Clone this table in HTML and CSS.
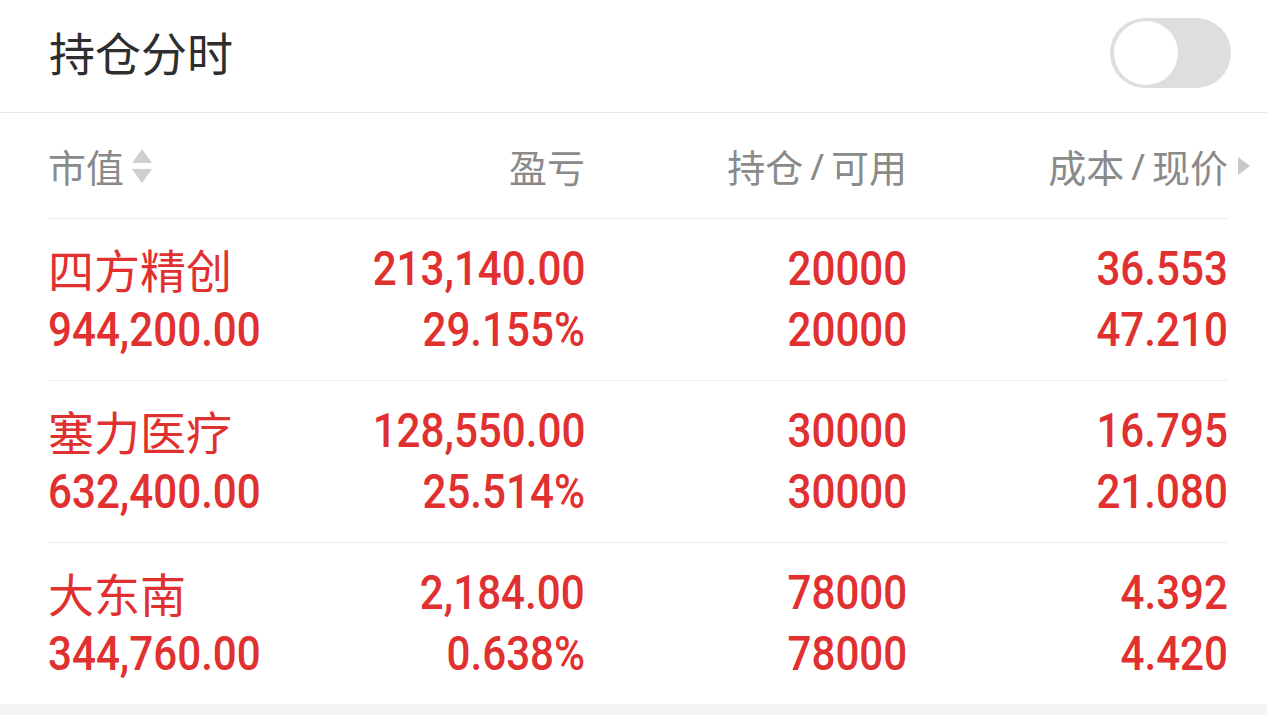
FILE: index.html
```html
<!DOCTYPE html>
<html lang="zh-CN">
<head>
<meta charset="utf-8">
<title>持仓分时</title>
<link rel="stylesheet" href="styles.css">
</head>
<body>
<div class="page">
  <header class="topbar">
    <h1 class="title">持仓分时</h1>
    <div class="toggle"><span class="knob"></span></div>
  </header>
  <section class="table">
    <div class="row head">
      <div class="cell left">市值<svg class="sort" viewBox="0 0 20 38" width="20" height="38"><polygon points="10,2 20,16 0,16" fill="#cfcfcf"/><polygon points="0,22 20,22 10,36" fill="#cfcfcf"/></svg></div>
      <div class="cell">盈亏</div>
      <div class="cell">持仓<span class="slash">/</span>可用</div>
      <div class="cell">成本<span class="slash">/</span>现价<svg class="more" viewBox="0 0 12 20" width="12" height="20"><polygon points="0,1 12,10 0,19" fill="#c8c8c8"/></svg></div>
    </div>
    <div class="row item">
      <div class="cell left"><div class="name">四方精创</div><div class="num">944,200.00</div></div>
      <div class="cell"><div class="num">213,140.00</div><div class="num">29.155%</div></div>
      <div class="cell"><div class="num">20000</div><div class="num">20000</div></div>
      <div class="cell"><div class="num">36.553</div><div class="num">47.210</div></div>
    </div>
    <div class="row item">
      <div class="cell left"><div class="name">塞力医疗</div><div class="num">632,400.00</div></div>
      <div class="cell"><div class="num">128,550.00</div><div class="num">25.514%</div></div>
      <div class="cell"><div class="num">30000</div><div class="num">30000</div></div>
      <div class="cell"><div class="num">16.795</div><div class="num">21.080</div></div>
    </div>
    <div class="row item last">
      <div class="cell left"><div class="name">大东南</div><div class="num">344,760.00</div></div>
      <div class="cell"><div class="num">2,184.00</div><div class="num">0.638%</div></div>
      <div class="cell"><div class="num">78000</div><div class="num">78000</div></div>
      <div class="cell"><div class="num">4.392</div><div class="num">4.420</div></div>
    </div>
  </section>
  <div class="footer-band"></div>
</div>
</body>
</html>
```

FILE: styles.css
```css
* { box-sizing: border-box; }
html, body { margin: 0; padding: 0; background: #ffffff; }
body {
  font-family: "Noto Sans CJK SC", "Noto Sans", sans-serif;
  width: 1267px;
  height: 715px;
  overflow: hidden;
}
.page { display: flex; flex-direction: column; height: 715px; }

.topbar {
  height: 113px;
  display: flex;
  align-items: center;
  justify-content: space-between;
  padding: 0 36px 0 49px;
  border-bottom: 1px solid #e6e6e6;
}
.title {
  margin: 0;
  font-size: 46px;
  font-weight: 400;
  color: #2e2e2e;
  line-height: 1;
  margin-top: -10px;
}
.toggle {
  width: 121px;
  height: 70px;
  border-radius: 35px;
  background: #dedede;
  padding: 3px 4px;
  display: flex;
  align-items: center;
  margin-top: -6px;
}
.knob {
  width: 64px;
  height: 64px;
  border-radius: 50%;
  background: #ffffff;
}

.table { padding: 0 39px 0 48px; flex: 0 0 auto; }
.row {
  display: grid;
  grid-template-columns: 216px 321px 322px 321px;
  border-bottom: 1px solid #ededed;
}
.row.last { border-bottom: none; }
.cell { text-align: right; display: flex; flex-direction: column; align-items: flex-end; }
.cell.left { text-align: left; align-items: flex-start; }

.head { height: 106px; align-items: center; }
.head .cell {
  flex-direction: row;
  align-items: center;
  justify-content: flex-end;
  font-size: 38px;
  color: #8a8a8a;
  line-height: 1;
}
.head .cell.left { justify-content: flex-start; }
.slash { margin: 0 7px; font-family: "Noto Sans", sans-serif; font-size: 37px; }
.sort { margin-left: 8px; }
.more { margin-right: -22px; margin-left: 10px; }

.item { height: 162px; padding-top: 19px; }
.row.item.last { height: 161px; }
.name, .num {
  height: 61px;
  line-height: 61px;
  color: #e0302f;
  white-space: nowrap;
}
.name { font-size: 46px; }
.num {
  font-family: "Roboto", "Noto Sans", sans-serif;
  font-weight: 500;
  font-size: 49px;
  transform: scaleX(0.86);
  transform-origin: right center;
}
.cell.left .num { transform-origin: left center; }

.footer-band { flex: 1 1 auto; background: #f3f3f3; }
```
